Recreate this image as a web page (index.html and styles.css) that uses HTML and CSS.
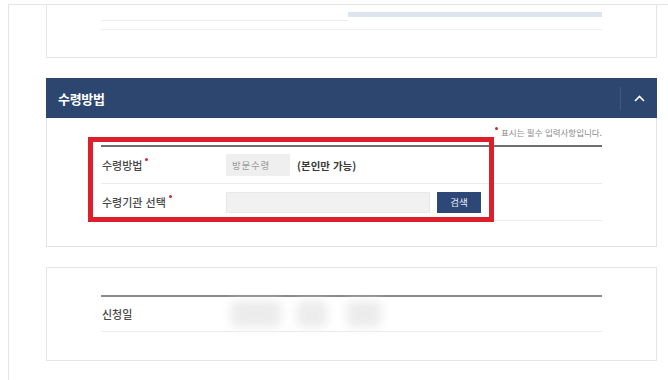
FILE: index.html
```html
<!DOCTYPE html>
<html lang="ko">
<head>
<meta charset="utf-8">
<title>수령방법</title>
<link rel="stylesheet" href="styles.css">
</head>
<body>
<div class="page">
  <div class="card card-top">
    <div class="inner">
      <div class="top-row">
        <div class="top-left"></div>
        <div class="top-bar"></div>
      </div>
      <div class="top-row2"></div>
    </div>
  </div>

  <div class="section">
    <div class="sec-head">
      <h2 class="sec-title">수령방법</h2>
      <div class="sec-toggle">
        <svg width="11" height="7" viewBox="0 0 11 7"><path d="M1 6 L5.5 1.5 L10 6" fill="none" stroke="#ffffff" stroke-width="1.6"/></svg>
      </div>
    </div>
    <div class="sec-body">
      <div class="inner">
        <p class="req-note"><span class="dot"></span>표시는 필수 입력사항입니다.</p>
        <div class="tbl">
          <div class="row">
            <div class="lbl">수령방법<span class="dot sup"></span></div>
            <div class="val">
              <span class="ro-box">방문수령</span>
              <span class="note">(본인만 가능)</span>
            </div>
          </div>
          <div class="row">
            <div class="lbl">수령기관 선택<span class="dot sup"></span></div>
            <div class="val">
              <span class="inp"></span>
              <button class="btn" type="button">검색</button>
            </div>
          </div>
        </div>
      </div>
      <div class="highlight"></div>
    </div>
  </div>

  <div class="card card-bottom">
    <div class="inner">
      <div class="tbl tbl-b">
        <div class="row row-b">
          <div class="lbl">신청일</div>
          <div class="val">
            <span class="blur b1"></span>
            <span class="blur b2"></span>
            <span class="blur b3"></span>
          </div>
        </div>
      </div>
    </div>
  </div>
</div>
</body>
</html>
```

FILE: styles.css
```css
* { box-sizing: border-box; }
html, body { margin: 0; padding: 0; background: #ffffff; }
body {
  font-family: "Noto Sans CJK KR", "Noto Sans", sans-serif;
  color: #444;
  width: 668px;
  height: 380px;
  overflow: hidden;
}
.page {
  margin: 4px 0 0 8px;
  border-top: 1px solid #e4e4e4;
  border-left: 1px solid #e4e4e4;
  height: 376px;
  padding: 0 11px 0 37px;
}
.card {
  border: 1px solid #e6e6e6;
  background: #fff;
}
.inner {
  margin: 0 54px 0 54px;
}
.card-top {
  border-top: none;
  height: 53px;
}
.top-row {
  display: flex;
  height: 16px;
}
.top-left {
  width: 247px;
  border-bottom: 1px solid #ececec;
}
.top-bar {
  flex: 1;
  height: 5px;
  margin-top: 7px;
  background: #dfe5ee;
}
.top-row2 {
  height: 9px;
  border-bottom: 1px solid #f0f0f0;
}
.section {
  margin-top: 20px;
}
.sec-head {
  display: flex;
  align-items: center;
  height: 40px;
  background: #2c4670;
}
.sec-title {
  flex: 1;
  margin: 0;
  padding-left: 12px;
  font-size: 13px;
  font-weight: 700;
  color: #ffffff;
  letter-spacing: -0.3px;
}
.sec-toggle {
  width: 37px;
  height: 23px;
  border-left: 1px solid #40597f;
  display: flex;
  align-items: center;
  justify-content: center;
}
.sec-body {
  position: relative;
  border: 1px solid #e3e3e3;
  border-top: none;
  height: 129px;
  padding-top: 8px;
}
.req-note {
  margin: 0;
  text-align: right;
  font-size: 8.5px;
  line-height: 12px;
  color: #8a8a8a;
  height: 19px;
}
.req-note .dot {
  vertical-align: 6px;
  margin-right: 3px;
}
.dot {
  display: inline-block;
  width: 3px;
  height: 3px;
  border-radius: 50%;
  background: #d6262f;
}
.dot.sup {
  vertical-align: 9px;
  margin-left: 3px;
}
.tbl {
  border-top: 2px solid #6f6f6f;
}
.row {
  display: flex;
  align-items: center;
  height: 37px;
  border-bottom: 1px solid #ececec;
}
.lbl {
  width: 125px;
  padding-left: 1px;
  font-size: 11px;
  font-weight: 500;
  color: #474747;
}
.val {
  display: flex;
  align-items: center;
}
.ro-box {
  display: inline-flex;
  align-items: center;
  width: 64px;
  height: 22px;
  padding-left: 6px;
  background: #efefef;
  color: #9a9a9a;
  font-size: 9.5px;
  letter-spacing: 0.8px;
}
.note {
  margin-left: 7px;
  font-size: 10.5px;
  font-weight: 700;
  color: #3a3a3a;
}
.inp {
  display: inline-block;
  width: 204px;
  height: 21px;
  background: #f1f1f1;
  border: 1px solid #e8e8e8;
}
.btn {
  margin-left: 7px;
  width: 44px;
  height: 21px;
  border: none;
  padding: 0;
  background: #2d4877;
  color: #e8edf5;
  font-family: inherit;
  font-size: 9.5px;
}
.highlight {
  position: absolute;
  left: 41px;
  top: 19px;
  width: 406px;
  height: 85px;
  border: 5px solid #dc1f2b;
}
.card-bottom {
  margin-top: 20px;
  height: 94px;
  padding-top: 27px;
}
.tbl-b {
  border-top: 2px solid #8a8a8a;
}
.row-b {
  height: 35px;
}
.blur {
  display: inline-block;
  height: 26px;
  background: #ececec;
  filter: blur(5px);
  border-radius: 4px;
}
.b1 { width: 50px; margin-left: 5px; }
.b2 { width: 30px; margin-left: 16px; }
.b3 { width: 34px; margin-left: 20px; }
```
